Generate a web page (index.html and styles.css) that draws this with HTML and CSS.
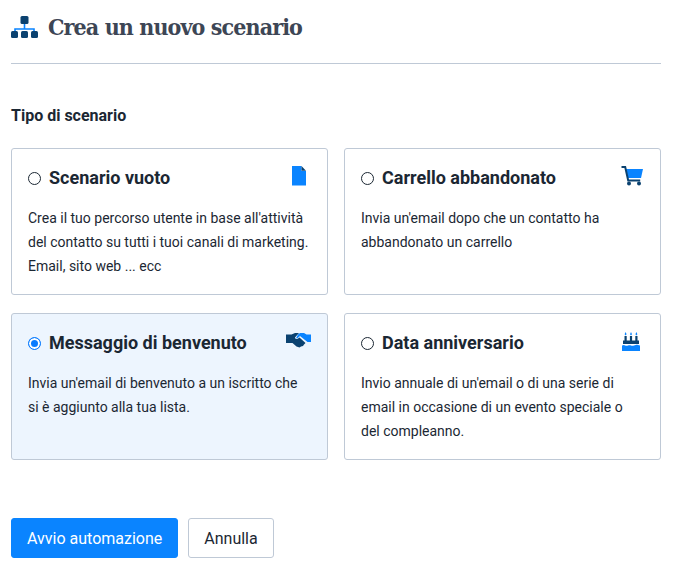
FILE: index.html
```html
<!DOCTYPE html>
<html lang="it">
<head>
<meta charset="utf-8">
<title>Crea un nuovo scenario</title>
<link rel="stylesheet" href="styles.css">
</head>
<body>
<main class="page">
  <header class="header">
    <svg class="title-icon" width="27" height="22" viewBox="0 0 27 22">
      <rect class="d" x="9.500" y="0" width="8" height="8" rx="1.500"/>
      <path class="l" d="M13.500 8v5M4 16v-3h19v3" fill="none" stroke-width="1.600"/>
      <rect class="d" x="0" y="15" width="7" height="7" rx="1.500"/>
      <rect class="d" x="10" y="15" width="7" height="7" rx="1.500"/>
      <rect class="d" x="20" y="15" width="7" height="7" rx="1.500"/>
    </svg>
    <h1 class="title">Crea un nuovo scenario</h1>
  </header>
  <h2 class="section">Tipo di scenario</h2>
  <div class="grid">
    <label class="card">
      <div class="card-head">
        <input class="radio" type="radio" name="s">
        <span class="card-title">Scenario vuoto</span>
        <svg class="icon" width="16" height="20" viewBox="0 0 16 20"><path class="b" d="M1 0h9.500v5H15v14.500H1z"/><path class="d" d="M10.500 0 15 4.800h-4.500z"/></svg>
      </div>
      <p class="text">Crea il tuo percorso utente in base all'attività del contatto su tutti i tuoi canali di marketing. Email, sito web ... ecc</p>
    </label>
    <label class="card">
      <div class="card-head">
        <input class="radio" type="radio" name="s">
        <span class="card-title">Carrello abbandonato</span>
        <svg class="icon cart" width="22" height="20" viewBox="0 0 22 20"><path class="b" d="M5 3h17l-2 9H7z"/><path d="M0.500 1h3.700l3 13.500h12" fill="none" class="l2" stroke-width="2"/><circle class="d" cx="8" cy="17.500" r="2"/><circle class="d" cx="18" cy="17.500" r="2"/></svg>
      </div>
      <p class="text">Invia un'email dopo che un contatto ha abbandonato un carrello</p>
    </label>
    <label class="card selected">
      <div class="card-head">
        <input class="radio" type="radio" name="s" checked>
        <span class="card-title">Messaggio di benvenuto</span>
        <svg class="icon shake" width="25" height="15" viewBox="0 0 25 15"><path class="d" d="M0 1.500h5.500L9 0h4l-4 4.500c0 1.500 2 2 3 1l1.500-1 6 5.500-1.500 1.500-1 1.500-2 .5-1.500 1-3-1-4-3.500H0z"/><path class="b" d="M12 1.500 14 0h4l2.500 1.500H25V9h-3.500L14 3l-2.500 2.200c-1 .6-1.800-.2-1-1z"/></svg>
      </div>
      <p class="text">Invia un'email di benvenuto a un iscritto che si è aggiunto alla tua lista.</p>
    </label>
    <label class="card">
      <div class="card-head">
        <input class="radio" type="radio" name="s">
        <span class="card-title">Data anniversario</span>
        <svg class="icon cake" width="18" height="19" viewBox="0 0 18 19"><path class="d" d="M2.500 4h2.200v5H2.500zM7.900 4h2.200v5H7.900zM13.300 4h2.200v5h-2.200z"/><path class="b" d="M3.600 0l1 2.200-1 1.300-1-1.300zM9 0l1 2.200-1 1.300-1-1.300zM14.400 0l1 2.200-1 1.300-1-1.300z"/><path class="d" d="M1 8.500h16v3.500H1z"/><path class="b" d="M0 13.500c3-1.800 3 1.200 6 0s3 1.200 6 0 3-1 6 0V19H0z"/></svg>
      </div>
      <p class="text">Invio annuale di un'email o di una serie di email in occasione di un evento speciale o del compleanno.</p>
    </label>
  </div>
  <div class="actions">
    <button class="btn primary" type="button">Avvio automazione</button>
    <button class="btn" type="button">Annulla</button>
  </div>
</main>
</body>
</html>
```
FILE: styles.css
```css
* { box-sizing: border-box; }
html, body { margin: 0; background: #fff; }
body { font-family: Roboto, "Liberation Sans", sans-serif; color: #1b2733; height: 571px; overflow: hidden; }
.page { width: 650px; margin-left: 11px; }
.header { display: flex; align-items: center; gap: 10px; height: 64px; padding-bottom: 10px; border-bottom: 1px solid #bfc9d6; }
.title-icon { flex: none; margin-top: 1px; }
.title { margin: 0; font-family: "DejaVu Serif", serif; font-stretch: condensed; font-size: 23px; font-weight: 700; letter-spacing: -0.9px; line-height: 34px; color: #3d4655; white-space: nowrap; }
.d { fill: #0b4270; }
.b { fill: #0a84ff; }
.l { stroke: #0a84ff; }
.l2 { stroke: #0b4270; }
.section { margin: 43px 0 0; font-size: 16px; font-weight: 700; line-height: 18px; color: #1b2733; }
.grid { display: grid; grid-template-columns: 317px 317px; grid-auto-rows: 147px; column-gap: 16px; row-gap: 18px; margin-top: 23px; }
.card { display: block; padding: 19px 16px 0 16px; border: 1px solid #bfc9d6; border-radius: 3px; background: #fff; position: relative; }
.card.selected { background: #edf5fe; }
.card-head { display: flex; align-items: center; height: 20px; }
.radio { appearance: none; width: 13px; height: 13px; margin: 0 8px 0 0; border: 1px solid #1b2733; border-radius: 50%; background: #fff; flex: none; }
.radio:checked { border-color: #0a7cff; box-shadow: inset 0 0 0 2px #fff; background: #0a7cff; }
.card-title { font-size: 18px; font-weight: 700; line-height: 20px; color: #1b2733; }
.icon { position: absolute; }
.card-head .icon { top: 17px; right: 20px; }
.card-head .cart { right: 17px; }
.card-head .shake { top: 19px; right: 16px; }
.card-head .cake { top: 18px; right: 20px; }
.text { margin: 18px 0 0; font-size: 14px; line-height: 24px; color: #1b2733; }
.actions { display: flex; gap: 10px; margin-top: 58px; }
.btn { height: 40px; padding: 0 15px; border: 1px solid #bfc9d6; border-radius: 3px; background: #fff; font: 400 16px Roboto, "Liberation Sans", sans-serif; color: #1b2733; }
.btn.primary { border-color: #0a84ff; background: #0a84ff; color: #fff; }
```
